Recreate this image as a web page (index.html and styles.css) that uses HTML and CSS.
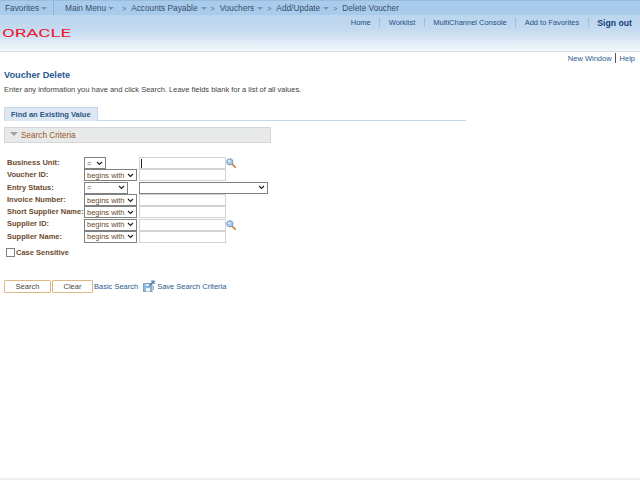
FILE: index.html
```html
<!DOCTYPE html>
<html lang="en">
<head>
<meta charset="utf-8">
<title>Voucher Delete</title>
<link rel="stylesheet" href="styles.css">
</head>
<body>
<svg class="defs" width="0" height="0" aria-hidden="true">
  <defs>
    <symbol id="lens" viewBox="0 0 11 11">
      <path d="M6.5 6.5 L10 10" stroke="#c9884a" stroke-width="2" stroke-linecap="round"/>
      <circle cx="4.2" cy="4.2" r="3.4" fill="#a9cbe8" stroke="#6f93b8" stroke-width="1"/>
      <circle cx="3.4" cy="3.4" r="1.2" fill="#e6f2fb"/>
    </symbol>
  </defs>
</svg>
<header class="header">
  <nav class="crumbs">
    <span class="crumb crumb-fav">Favorites<i class="caret"></i></span>
    <span class="crumb crumb-main">Main Menu<i class="caret"></i></span>
    <span class="sep">&gt;</span>
    <span class="crumb">Accounts Payable<i class="caret wide"></i></span>
    <span class="sep">&gt;</span>
    <span class="crumb">Vouchers<i class="caret wide"></i></span>
    <span class="sep">&gt;</span>
    <span class="crumb">Add/Update<i class="caret wide"></i></span>
    <span class="sep">&gt;</span>
    <span class="crumb">Delete Voucher</span>
  </nav>
  <div class="brand-row">
    <svg class="logo" width="72" height="12" viewBox="0 0 72 12" role="img" aria-label="Oracle">
      <text x="0" y="10" textLength="69" lengthAdjust="spacingAndGlyphs" class="logo-text">ORACLE</text>
    </svg>
    <ul class="global-links">
      <li><a>Home</a></li>
      <li><a>Worklist</a></li>
      <li><a>MultiChannel Console</a></li>
      <li><a>Add to Favorites</a></li>
      <li><a class="signout">Sign out</a></li>
    </ul>
  </div>
</header>
<div class="page-links"><a>New Window</a><span class="bar"></span><a>Help</a></div>
<main class="content">
  <h1 class="title">Voucher Delete</h1>
  <p class="intro">Enter any information you have and click Search. Leave fields blank for a list of all values.</p>
  <div class="tabs"><span class="tab">Find an Existing Value</span></div>
  <div class="section-head"><i class="tri"></i><span>Search Criteria</span></div>
  <form class="criteria">
    <label class="lbl">Business Unit:</label>
    <div class="ctl"><select class="sel sel-eq"><option>=</option></select></div>
    <div class="val"><span class="inp inp-focus"><i class="cursor"></i></span><svg class="lens" width="10" height="10"><use href="#lens"/></svg></div>

    <label class="lbl">Voucher ID:</label>
    <div class="ctl"><select class="sel"><option>begins with</option></select></div>
    <div class="val"><input class="inp" type="text"></div>

    <label class="lbl">Entry Status:</label>
    <div class="ctl"><select class="sel sel-eq2"><option>=</option></select></div>
    <div class="val"><select class="sel sel-status"><option></option></select></div>

    <label class="lbl">Invoice Number:</label>
    <div class="ctl"><select class="sel"><option>begins with</option></select></div>
    <div class="val"><input class="inp" type="text"></div>

    <label class="lbl">Short Supplier Name:</label>
    <div class="ctl"><select class="sel"><option>begins with</option></select></div>
    <div class="val"><input class="inp" type="text"></div>

    <label class="lbl">Supplier ID:</label>
    <div class="ctl"><select class="sel"><option>begins with</option></select></div>
    <div class="val"><input class="inp" type="text"><svg class="lens" width="10" height="10"><use href="#lens"/></svg></div>

    <label class="lbl">Supplier Name:</label>
    <div class="ctl"><select class="sel"><option>begins with</option></select></div>
    <div class="val"><input class="inp" type="text"></div>
  </form>
  <div class="case"><i class="check"></i><span>Case Sensitive</span></div>
  <div class="actions">
    <button class="btn btn-search" type="button">Search</button>
    <button class="btn btn-clear" type="button">Clear</button>
    <a class="link">Basic Search</a>
    <svg class="save-icon" width="12" height="12" viewBox="0 0 12 12" aria-hidden="true">
      <rect x="0.5" y="3.5" width="8.5" height="8" fill="#8fb6dc" stroke="#7f9fc0"/>
      <rect x="3" y="8" width="4" height="3.5" fill="#f4f8fc"/>
      <rect x="2.5" y="4" width="5" height="2" fill="#dbe8f4"/>
      <path d="M6 6 L10 2 M8 1h3v3" stroke="#3f78b0" stroke-width="1.2" fill="none"/>
      <path d="M10.5 6v4" stroke="#8fb0cf"/>
    </svg>
    <a class="link">Save Search Criteria</a>
  </div>
</main>
<footer class="foot"></footer>
</body>
</html>
```
FILE: styles.css
```css
* { box-sizing: border-box; }
html, body { margin: 0; padding: 0; height: 480px; overflow: hidden; }
body {
  position: relative;
  background: #fff;
  font-family: "Liberation Sans", Arial, sans-serif;
  font-size: 7.5px;
  color: #333;
  display: flex;
  flex-direction: column;
}
.defs { position: absolute; }
a { color: #2a5a90; text-decoration: none; }
.header {
  height: 52px;
  flex: none;
  background: linear-gradient(#bcd6ee 0, #bcd6ee 18px, #c3d9ef 28px, #d3e2f3 38px, #e3edf8 42px, #f0f5fb 50px);
  border-bottom: 1px solid #d9dbe3;
}
.crumbs {
  height: 15px;
  display: flex;
  align-items: center;
  background: #a9cbec;
  border-top: 1px solid #9cbcdc;
  font-size: 8.3px;
  color: #3a4f68;
  white-space: nowrap;
}
.crumb { display: inline-flex; align-items: center; }
.crumb-fav { width: 54px; padding-left: 5px; border-right: 1px solid #8fb0d0; height: 14px; margin-right: 11px; }
.crumb-main { margin-right: 8px; }
.sep { margin-right: 5px; font-size: 7px; color: #4c6a88; }
.caret {
  width: 0; height: 0; margin: 1px 0 0 2px;
  border: 3px solid transparent; border-bottom: 0; border-top-color: #7c93ad;
}
.caret.wide { margin-left: 3px; margin-right: 4px; }
.brand-row {
  display: flex;
  justify-content: space-between;
  align-items: flex-start;
  padding-left: 2px;
}
.logo { margin-top: 12px; flex: none; }
.logo-text { font-family: Roboto, "Liberation Sans", sans-serif; font-weight: 400; font-size: 11px; fill: #f0142c; }
.global-links {
  list-style: none; margin: 3px 8px 0 0; padding: 0;
  display: flex; align-items: center; font-size: 7.5px;
}
.global-links li { padding: 0 8.5px; height: 9px; line-height: 9px; border-left: 1px solid #a4bcd4; white-space: nowrap; }
.global-links li:first-child { border-left: 0; }
.global-links li:last-child { padding-right: 0; }
.global-links a { color: #1f4f86; }
.global-links .signout { font-weight: bold; font-size: 8.7px; color: #123f78; line-height: 11px; }
.page-links {
  display: flex; justify-content: flex-end; align-items: center;
  height: 12px; padding-right: 5px;
  font-size: 7.5px;
}
.page-links .bar { width: 1px; height: 10px; background: #555; margin: 0 4px 0 3px; }
.content { padding: 5px 0 0 4px; flex: 1; }
.title { margin: 0; font-size: 9.2px; line-height: 12px; color: #2c5a92; font-weight: bold; }
.intro { margin: 4px 0 0; line-height: 10px; font-size: 7.5px; color: #444; }
.tabs {
  margin-top: 12px; width: 462px; height: 14px;
  border-bottom: 1px solid #c5d6e8;
}
.tab {
  display: inline-block; height: 14px; line-height: 13px; padding: 0 6px;
  background: #dbe7f3; border: 1px solid #c6d6e6; border-bottom: 0;
  font-weight: bold; color: #2e5585; font-size: 7.5px;
}
.section-head {
  margin-top: 6px; width: 267px; height: 16px;
  background: #e8e9e9; border: 1px solid #d4d6d8;
  display: flex; align-items: center; padding: 1px 0 0 5px;
  color: #9a5a2a; font-size: 8.2px;
}
.tri {
  width: 0; height: 0; margin: -4px 3px 0 0;
  border: 4px solid transparent; border-top: 4px solid #a3a3a3; border-bottom: 0;
}
.criteria {
  margin-top: 14px;
  display: grid;
  grid-template-columns: 80px 55px 1fr;
  grid-auto-rows: 12.3px;
  width: 300px;
}
.lbl { padding-left: 3px; font-weight: bold; color: #6b4a2c; font-size: 7.5px; line-height: 11px; white-space: nowrap; }
.ctl, .val { display: flex; align-items: center; }
.sel {
  appearance: none;
  height: 12px; width: 53px; padding: 0 0 0 2px; margin: 0;
  font: 7.5px "Liberation Sans", Arial, sans-serif;
  color: #6b4a2c; border: 1px solid #808080; border-radius: 0;
  background: #fff url("data:image/svg+xml,%3Csvg xmlns='http://www.w3.org/2000/svg' width='7' height='5'%3E%3Cpath d='M1 1l2.5 2.5L6 1' fill='none' stroke='%23222' stroke-width='1.2'/%3E%3C/svg%3E") no-repeat right 2px center;
}
.sel-eq { width: 22px; }
.sel-eq2 { width: 44px; }
.sel-status { width: 129px; margin-left: 0; }
.inp {
  display: inline-flex; align-items: center;
  width: 87px; height: 12px; padding: 0 1px; margin: 0;
  background: #fff; border: 1px solid #d3d3d3; border-radius: 0; font-size: 7.5px;
}
.cursor { display: block; width: 1px; height: 9px; background: #222; }
.lens { flex: none; }
.case { display: flex; align-items: center; margin: 3px 0 0 2px; height: 12px; color: #6b4a2c; font-weight: bold; font-size: 7.5px; }
.check { width: 9px; height: 9px; border: 1px solid #808080; background: #fff; margin-right: 1px; }
.actions { display: flex; align-items: center; margin-top: 21px; height: 14px; }
.btn {
  height: 13px; padding: 0; margin: 0 1px 0 0;
  background: #fff; border: 1px solid #e0b78a; border-radius: 1px;
  font: 7.5px "Liberation Sans", Arial, sans-serif; color: #444;
}
.btn-search { width: 47px; }
.btn-clear { width: 41px; }
.link { color: #2a5a90; font-size: 7.5px; }
.save-icon { margin: 0 2px 0 5px; flex: none; }
.foot { height: 2px; flex: none; background: #eeeff0; }
```
